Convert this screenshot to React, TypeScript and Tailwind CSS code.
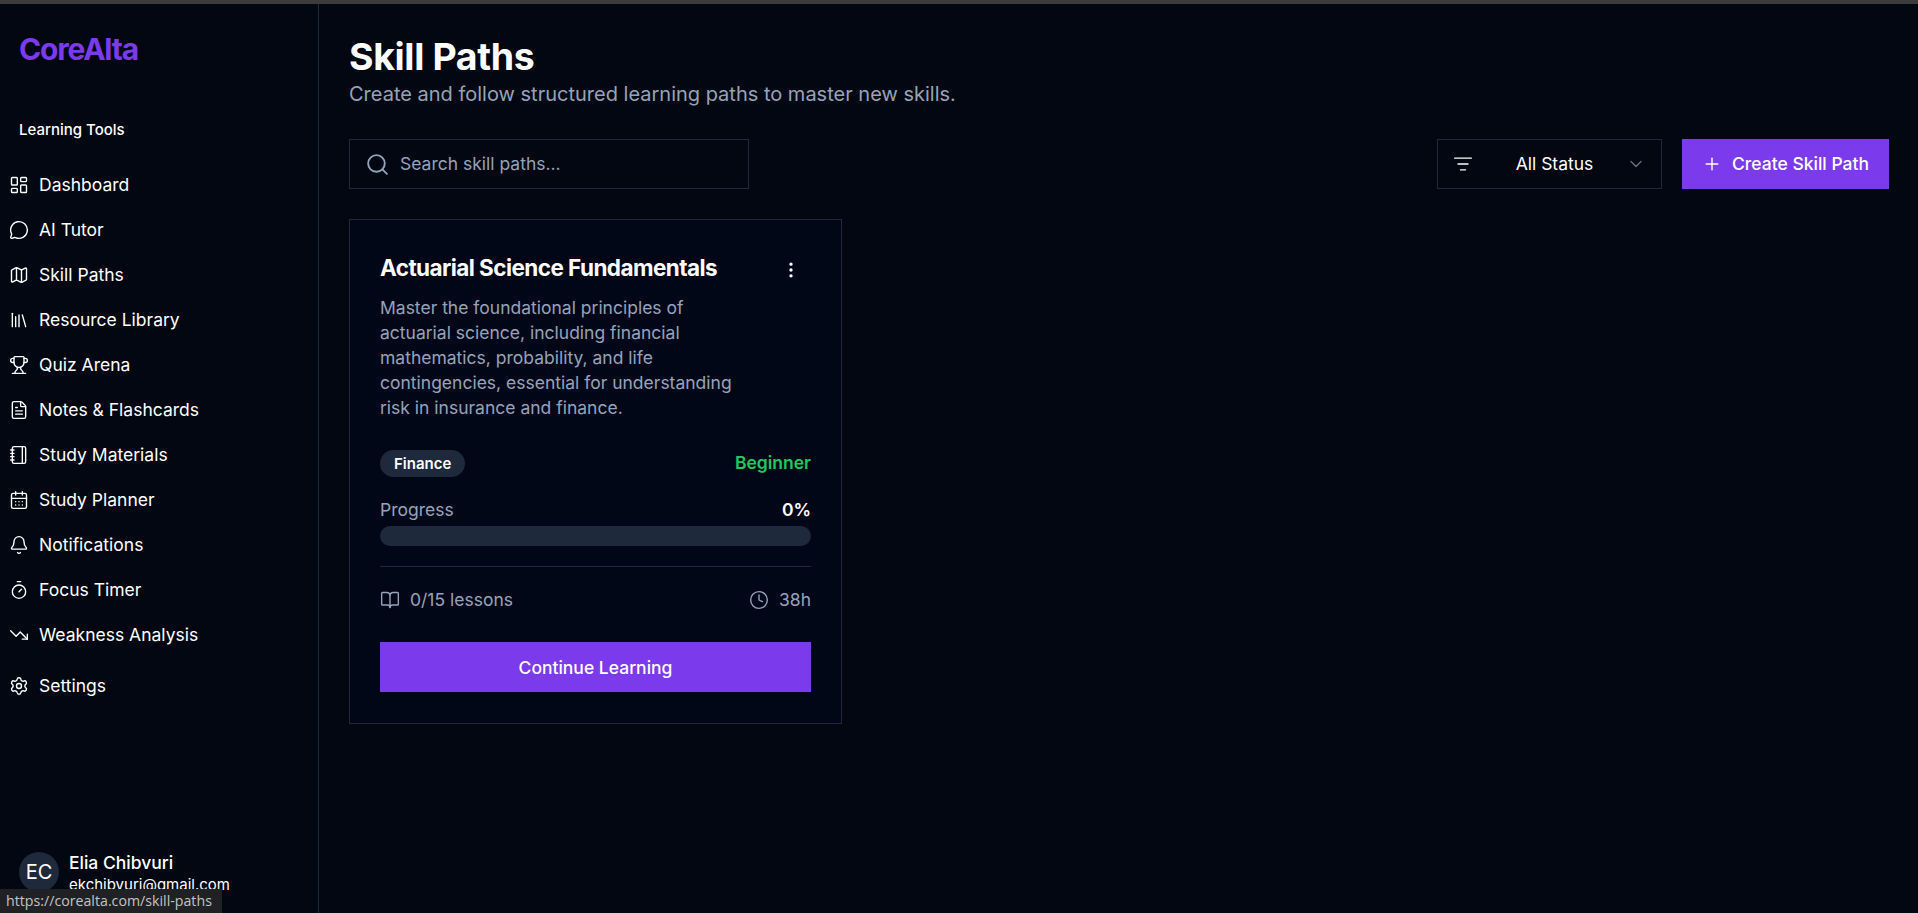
import React from "react";
import {
  LayoutDashboard, MessageCircle, Map, Library, Trophy, FileText, Notebook, CalendarDays, Bell, Timer,
  TrendingDown, Settings, Search, ListFilter, ChevronDown, Plus, BookOpen, Clock, EllipsisVertical,
} from "lucide-react";

const items: [typeof Map, string][] = [
  [LayoutDashboard, "Dashboard"],
  [MessageCircle, "AI Tutor"],
  [Map, "Skill Paths"],
  [Library, "Resource Library"],
  [Trophy, "Quiz Arena"],
  [FileText, "Notes & Flashcards"],
  [Notebook, "Study Materials"],
  [CalendarDays, "Study Planner"],
  [Bell, "Notifications"],
  [Timer, "Focus Timer"],
  [TrendingDown, "Weakness Analysis"],
];

function NavRow({ icon: Icon, label }: { icon: typeof Map; label: string }) {
  return (
    <a className="flex h-[45px] items-center gap-[10px] px-[9px] text-[17.5px] font-normal text-white">
      <Icon size={20} strokeWidth={1.67} className="-mt-[1px] shrink-0" />
      <span>{label}</span>
    </a>
  );
}

export default function App() {
  return (
    <div className="relative flex h-[913px] flex-col overflow-hidden bg-[#020711] font-[family-name:Inter,sans-serif] text-white">
      <div className="h-[4px] shrink-0 bg-[#3c3c3c]" />
      <div className="flex min-h-0 flex-1">
        <aside className="flex w-[319px] shrink-0 flex-col border-r border-[#1e293b]">
          <div className="px-[19px] pt-[26px] text-[30px] leading-[38px] font-bold tracking-[-0.04em] text-[#7c3aed]">CoreAlta</div>
          <div className="mt-[52px] px-[19px] text-[15px] leading-[20px] font-medium">Learning Tools</div>
          <nav className="mt-[23px] flex flex-col">
            {items.map(([icon, label]) => (
              <NavRow key={label} icon={icon} label={label} />
            ))}
          </nav>
          <div className="mt-[6px]">
            <NavRow icon={Settings} label="Settings" />
          </div>
          <div className="mt-auto flex items-start gap-[10px] px-[19px]">
            <div className="flex h-10 w-10 shrink-0 items-center justify-center rounded-full bg-[#1e293b] text-[20px]">EC</div>
            <div className="-mt-[2px]">
              <div className="text-[17.5px] leading-[25px] font-medium">Elia Chibvuri</div>
              <div className="text-[15px] leading-[20px]">ekchibvuri@gmail.com</div>
            </div>
          </div>
          <div className="h-[18px] shrink-0" />
        </aside>
        <main className="min-w-0 flex-1 pt-[30px] pr-[29px] pl-[30px]">
          <h1 className="text-[37.5px] leading-[45px] font-bold tracking-[-0.01em]">Skill Paths</h1>
          <p className="text-[20px] leading-[30px] text-[#94a3b8]">Create and follow structured learning paths to master new skills.</p>
          <div className="mt-[30px] flex items-center justify-between">
            <div className="flex h-[50px] w-[400px] items-center gap-[10px] border border-[#1e293b] pl-[15px]">
              <Search size={25} strokeWidth={1.8} className="shrink-0 text-[#94a3b8]" />
              <span className="pt-[1px] text-[17.5px] text-[#94a3b8]">Search skill paths...</span>
            </div>
            <div className="flex items-center gap-[20px]">
              <div className="flex h-[50px] w-[225px] items-center border border-[#1e293b] pr-[15px] pl-[15px]">
                <ListFilter size={20} strokeWidth={1.67} className="shrink-0" />
                <span className="flex-1 pt-[1px] pl-[10px] text-center text-[17.5px]">All Status</span>
                <ChevronDown size={20} strokeWidth={1.67} className="shrink-0 text-[#64748b]" />
              </div>
              <button className="flex h-[50px] w-[207px] items-center justify-center gap-[10px] bg-[#7c3aed] text-[17.5px] font-medium">
                <Plus size={20} strokeWidth={1.67} />
                <span className="pt-[1px]">Create Skill Path</span>
              </button>
            </div>
          </div>
          <section className="mt-[30px] h-[505px] w-[493px] border border-[#1e293b] bg-[#020718] p-[30px]">
            <div className="flex items-start justify-between">
              <div className="w-[362px]">
                <h2 className="text-[22.5px] leading-[35px] font-bold tracking-[-0.025em]">Actuarial Science Fundamentals</h2>
                <p className="mt-[10px] text-[17.5px] leading-[25px] text-[#94a3b8]">
                  Master the foundational principles of actuarial science, including financial mathematics, probability, and life contingencies, essential for understanding risk in insurance and finance.
                </p>
              </div>
              <div className="flex h-10 w-10 items-center justify-center">
                <EllipsisVertical size={20} strokeWidth={2} />
              </div>
            </div>
            <div className="mt-[30px] flex items-center justify-between">
              <span className="rounded-full bg-[#1e293b] px-[14px] text-[15px] leading-[27px] font-semibold">Finance</span>
              <span className="text-[17.5px] font-semibold text-[#22c55e]">Beginner</span>
            </div>
            <div className="mt-[20px] flex justify-between text-[17.5px] leading-[25px]">
              <span className="text-[#94a3b8]">Progress</span>
              <span className="font-semibold">0%</span>
            </div>
            <div className="mt-[4px] h-5 rounded-full bg-[#1e293b]" />
            <div className="mt-[20px] border-t border-[#1e293b] pt-[20px]">
              <div className="flex items-center justify-between text-[17.5px] leading-[25px] text-[#94a3b8]">
                <span className="flex items-center gap-[10px]"><BookOpen size={20} strokeWidth={1.67} />0/15 lessons</span>
                <span className="flex items-center gap-[10px]"><Clock size={20} strokeWidth={1.67} />38h</span>
              </div>
            </div>
            <button className="mt-[30px] flex h-[50px] w-full items-center justify-center bg-[#7c3aed] pt-[2px] text-[17.5px] font-medium">Continue Learning</button>
          </section>
        </main>
      </div>
      <div className="absolute bottom-0 left-0 flex h-[24px] w-[222px] items-center bg-[#202124] pl-[6px] font-[family-name:'Open_Sans',sans-serif] text-[14.2px] whitespace-nowrap text-[#c4c4c4]">
        https://corealta.com/skill-paths
      </div>
    </div>
  );
}
